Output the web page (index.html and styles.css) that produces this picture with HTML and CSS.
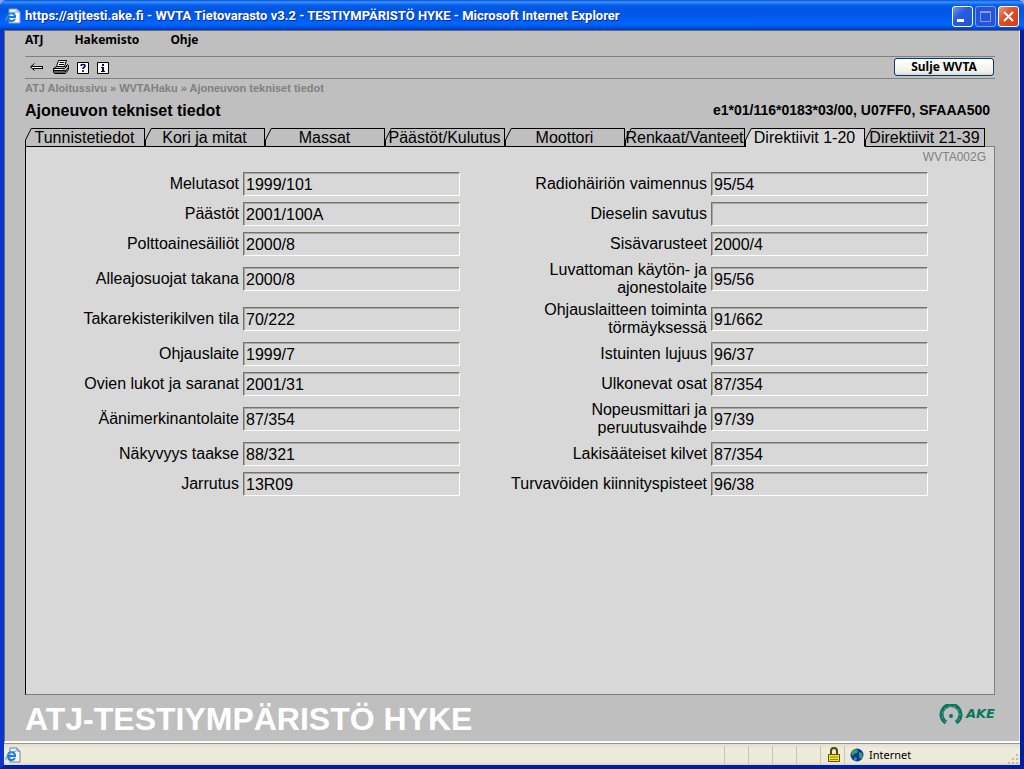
FILE: index.html
```html
<!DOCTYPE html>
<html lang="fi">
<head>
<meta charset="utf-8">
<title>WVTA Tietovarasto v3.2</title>
<link rel="stylesheet" href="styles.css">
</head>
<body>
<div class="window">
  <header class="titlebar">
    <svg class="page-icon" width="16" height="16" viewBox="0 0 16 16" aria-hidden="true">
      <path d="M4 1h8l3 3v11H4z" fill="#f4f6fb" stroke="#8d98b0"/>
      <path d="M12 1v3h3" fill="#cfd6e6" stroke="#8d98b0"/>
      <path d="M2.500 9h7.500c0-5-7-5-7 0s5 5 7 2" fill="none" stroke="#1b78d8" stroke-width="2"/>
      <path d="M1 13C0 9 6 4 11 4" fill="none" stroke="#48a5ee"/>
    </svg>
    <h1 class="window-title">https://atjtesti.ake.fi - WVTA Tietovarasto v3.2 - TESTIYMPÄRISTÖ HYKE - Microsoft Internet Explorer</h1>
    <div class="window-buttons">
      <button class="wbtn" type="button" aria-label="Minimize"><svg width="19" height="19" viewBox="0 0 19 19"><path d="M4 12h7v3H4z" fill="#fff"/></svg></button>
      <button class="wbtn wbtn-off" type="button" aria-label="Maximize" disabled><svg width="19" height="19" viewBox="0 0 19 19"><path d="M4.500 4.500h10v10h-10zM4 5.500h11" fill="none" stroke="#7f9cf0"/></svg></button>
      <button class="wbtn wbtn-close" type="button" aria-label="Close"><svg width="19" height="19" viewBox="0 0 19 19"><path d="M5 5l9 9M14 5l-9 9" stroke="#fff" stroke-width="2"/></svg></button>
    </div>
  </header>

  <main class="page">
    <nav class="menu">
      <a href="#">ATJ</a><a href="#">Hakemisto</a><a href="#">Ohje</a>
    </nav>
    <div class="toolbar">
      <button class="tool" type="button" aria-label="Takaisin"><svg width="15" height="14" viewBox="0 0 15 14"><path d="M5.500 2.500L1.500 6l4 3.500" fill="none" stroke="#000"/><path d="M2 5.500h12M13.500 5v3M4 7.500h10" stroke="#000" fill="none"/><path d="M3 6.500h10" stroke="#fff"/></svg></button>
      <button class="tool" type="button" aria-label="Tulosta"><svg width="17" height="16" viewBox="0 0 17 16"><path d="M4.500 6.500l2-6h8l-2 6z" fill="#fff" stroke="#000"/><path d="M7.500 2.500h5M7 4.500h5" stroke="#000"/><path d="M1.500 8.500l3-2h9l2-2 1 1v4l-3 4h-11l-1-1z" fill="#bbb" stroke="#000"/><path d="M1.500 8.500h11l3-3M1.500 10.500h12M2 12h11l3-4" fill="none" stroke="#000"/><path d="M3 9.500h8" stroke="#fff"/></svg></button>
      <button class="tool" type="button" aria-label="Ohje"><svg width="12" height="14" viewBox="0 0 12 14"><path d="M.5 1.500h11v11H.5z" fill="#fff" stroke="#000"/><path d="M4 5c0-2 4-2 4 0 0 1.500-2 1-2 3M6 9v2" fill="none" stroke="#00007a" stroke-width="1.600"/></svg></button>
      <button class="tool" type="button" aria-label="Tiedot"><svg width="12" height="14" viewBox="0 0 12 14"><path d="M.5 1.500h11v11H.5z" fill="#fff" stroke="#000"/><path d="M5 3h2v2H5zM4 6h3v4h1v1H4v-1h1V7H4z" fill="#00007a"/></svg></button>
      <button class="close-app" type="button">Sulje WVTA</button>
    </div>
    <nav class="crumbs"><a href="#">ATJ Aloitussivu</a> » <a href="#">WVTAHaku</a> » <span>Ajoneuvon tekniset tiedot</span></nav>
    <div class="heading">
      <h2>Ajoneuvon tekniset tiedot</h2>
      <strong>e1*01/116*0183*03/00, U07FF0, SFAAA500</strong>
    </div>

    <div class="tabs">
      <button class="tab" type="button"><svg class="slant" width="7" height="19" viewBox="0 0 7 19"><path d="M0 0h7L.5 12V19H0z" fill="#bfbfbf"/><path d="M6.500 0L.5 12V19" fill="none" stroke="#000"/></svg><span>Tunnistetiedot</span></button>
      <button class="tab" type="button"><svg class="slant" width="7" height="19" viewBox="0 0 7 19"><path d="M0 0h7L.5 12V19H0z" fill="#bfbfbf"/><path d="M6.500 0L.5 12V19" fill="none" stroke="#000"/></svg><span>Kori ja mitat</span></button>
      <button class="tab" type="button"><svg class="slant" width="7" height="19" viewBox="0 0 7 19"><path d="M0 0h7L.5 12V19H0z" fill="#bfbfbf"/><path d="M6.500 0L.5 12V19" fill="none" stroke="#000"/></svg><span>Massat</span></button>
      <button class="tab" type="button"><svg class="slant" width="7" height="19" viewBox="0 0 7 19"><path d="M0 0h7L.5 12V19H0z" fill="#bfbfbf"/><path d="M6.500 0L.5 12V19" fill="none" stroke="#000"/></svg><span>Päästöt/Kulutus</span></button>
      <button class="tab" type="button"><svg class="slant" width="7" height="19" viewBox="0 0 7 19"><path d="M0 0h7L.5 12V19H0z" fill="#bfbfbf"/><path d="M6.500 0L.5 12V19" fill="none" stroke="#000"/></svg><span>Moottori</span></button>
      <button class="tab" type="button"><svg class="slant" width="7" height="19" viewBox="0 0 7 19"><path d="M0 0h7L.5 12V19H0z" fill="#bfbfbf"/><path d="M6.500 0L.5 12V19" fill="none" stroke="#000"/></svg><span>Renkaat/Vanteet</span></button>
      <button class="tab tab-active" type="button"><svg class="slant" width="7" height="19" viewBox="0 0 7 19"><path d="M0 0h7L.5 12V19H0z" fill="#bfbfbf"/><path d="M6.500 0L.5 12V19" fill="none" stroke="#000"/></svg><span>Direktiivit 1-20</span></button>
      <button class="tab" type="button"><svg class="slant" width="7" height="19" viewBox="0 0 7 19"><path d="M0 0h7L.5 12V19H0z" fill="#bfbfbf"/><path d="M6.500 0L.5 12V19" fill="none" stroke="#000"/></svg><span>Direktiivit 21-39</span></button>
      <span class="tab-rest"></span>
    </div>

    <section class="panel">
      <p class="code">WVTA002G</p>
      <form class="fields">
        <label for="a1">Melutasot</label><input id="a1" value="1999/101" readonly>
        <label for="b1">Radiohäiriön vaimennus</label><input id="b1" value="95/54" readonly>
        <label for="a2">Päästöt</label><input id="a2" value="2001/100A" readonly>
        <label for="b2">Dieselin savutus</label><input id="b2" value="" readonly>
        <label for="a3">Polttoainesäiliöt</label><input id="a3" value="2000/8" readonly>
        <label for="b3">Sisävarusteet</label><input id="b3" value="2000/4" readonly>
        <label for="a4">Alleajosuojat takana</label><input id="a4" value="2000/8" readonly>
        <label for="b4">Luvattoman käytön- ja<br>ajonestolaite</label><input id="b4" value="95/56" readonly>
        <label for="a5">Takarekisterikilven tila</label><input id="a5" value="70/222" readonly>
        <label for="b5">Ohjauslaitteen toiminta<br>törmäyksessä</label><input id="b5" value="91/662" readonly>
        <label for="a6">Ohjauslaite</label><input id="a6" value="1999/7" readonly>
        <label for="b6">Istuinten lujuus</label><input id="b6" value="96/37" readonly>
        <label for="a7">Ovien lukot ja saranat</label><input id="a7" value="2001/31" readonly>
        <label for="b7">Ulkonevat osat</label><input id="b7" value="87/354" readonly>
        <label for="a8">Äänimerkinantolaite</label><input id="a8" value="87/354" readonly>
        <label for="b8">Nopeusmittari ja<br>peruutusvaihde</label><input id="b8" value="97/39" readonly>
        <label for="a9">Näkyvyys taakse</label><input id="a9" value="88/321" readonly>
        <label for="b9">Lakisääteiset kilvet</label><input id="b9" value="87/354" readonly>
        <label for="a10">Jarrutus</label><input id="a10" value="13R09" readonly>
        <label for="b10">Turvavöiden kiinnityspisteet</label><input id="b10" value="96/38" readonly>
      </form>
    </section>

    <footer class="brand">
      <strong>ATJ-TESTIYMPÄRISTÖ HYKE</strong>
      <div class="logo">
        <svg width="24" height="21" viewBox="0 0 24 21" aria-hidden="true">
          <path d="M7 18.500A9.500 9.500 0 1 1 17 18.500" fill="none" stroke="#08755c" stroke-width="4"/>
          <path d="M7 18.500A9 9 0 1 1 17 18.500" fill="none" stroke="#6aa294" stroke-width="1" stroke-dasharray="3 2"/>
          <circle cx="12" cy="12" r="2" fill="#08755c"/>
        </svg>
        <span>AKE</span>
      </div>
    </footer>
  </main>

  <div class="statusbar">
    <svg class="page-icon" width="16" height="16" viewBox="0 0 16 16" aria-hidden="true">
      <path d="M5 1h7l3 3v11H5z" fill="#f4f6fb" stroke="#6d7ca8"/>
      <path d="M12 1v3h3" fill="#cfd6e6" stroke="#6d7ca8"/>
      <path d="M2.500 9h7.500c0-5-7-5-7 0s5 5 7 2" fill="none" stroke="#1b78d8" stroke-width="2"/>
      <path d="M1 13C0 9 6 4 11 4" fill="none" stroke="#48a5ee"/>
    </svg>
    <div class="cells"><i></i><i></i><i></i><i></i></div>
    <div class="lock"><svg width="14" height="16" viewBox="0 0 14 16" aria-hidden="true"><path d="M4 8V4c0-4 6-4 6 0v4" fill="none" stroke="#4a4a00" stroke-width="2"/><path d="M1.500 7.500h11v7h-11z" fill="#f3e52c" stroke="#5a5200"/><path d="M3 10h8M3 12.500h8" stroke="#8d8300"/></svg></div>
    <div class="zone"><svg width="14" height="14" viewBox="0 0 14 14" aria-hidden="true"><circle cx="7" cy="7" r="6.500" fill="#1230b8"/><path d="M2 3l3-2 3 1-1 3-3 1-1 2-2-2zM9 4l3 1 1 4-2 2-2-2zM4 9l3 1-1 3-2-1z" fill="#2fa64a"/></svg><span>Internet</span></div>
    <svg class="grip" width="12" height="12" viewBox="0 0 12 12" aria-hidden="true"><path d="M9 1h2v2H9zM5 5h2v2H5zM9 5h2v2H9zM1 9h2v2H1zM5 9h2v2H5zM9 9h2v2H9z" fill="#c0bba4"/></svg>
  </div>
</div>
</body>
</html>
```
FILE: styles.css
```css
* { box-sizing: border-box; }
body {
  margin: 0;
  background: #8aa6e8;
  font-family: "Liberation Sans", Arial, sans-serif;
  font-size: 16px;
  color: #000;
}
a { color: inherit; text-decoration: none; }
button { font: inherit; color: inherit; margin: 0; padding: 0; border: 0; background: none; }
svg { display: block; flex: none; }

.window {
  display: flex;
  flex-direction: column;
  min-height: 100vh;
  border: solid #0a35c8;
  border-width: 0 4px 4px 4px;
  border-right-color: #001ea0;
  border-bottom-color: #001ea0;
  border-radius: 7px 7px 0 0;
  background: #0a35c8;
}

.titlebar {
  display: flex;
  align-items: center;
  gap: 4px;
  height: 30px;
  margin: 0 -4px;
  padding: 2px 5px 0 5px;
  border-radius: 7px 7px 0 0;
  background: linear-gradient(#0a4fd8 0, #3a92ff 2px, #0560ea 5px, #0054e3 10px, #005cf0 18px, #0066ff 24px, #0056e6 27px, #0038b8 30px);
}
.window-title {
  flex: 1;
  min-width: 0;
  margin: 0;
  overflow: hidden;
  white-space: nowrap;
  font: bold 13px/16px Roboto, sans-serif;
  color: #fff;
  text-shadow: 1px 1px 0 #0a2a8c;
}
.window-buttons { display: flex; gap: 2px; }
.wbtn {
  width: 21px;
  height: 21px;
  border: 1px solid #fff;
  border-radius: 3px;
  background: linear-gradient(135deg, #6f98f4, #2a5be0 40%, #2154d8);
}
.wbtn-off { border-color: #7f9cf0; background: #2753d8; }
.wbtn-close { background: linear-gradient(135deg, #f09a80, #e0502c 40%, #d03c14); }

.page {
  flex: 1;
  display: flex;
  flex-direction: column;
  padding: 0 24px 0 20px;
  border: solid;
  border-width: 1px 1px 2px 1px;
  border-color: #6a6a6a #e8e8e8 #fff #6a6a6a;
  background: #bfbfbf;
}

.menu {
  display: flex;
  gap: 31px;
  padding: 1px 0 8px;
  font: bold 12px/16px "Noto Sans", sans-serif;
}
.toolbar {
  display: flex;
  align-items: center;
  gap: 8px;
  height: 23px;
  padding-left: 4px;
  border: solid #808080;
  border-width: 1px 0;
}
.close-app {
  width: 100px;
  height: 18px;
  margin: 0 1px 2px auto;
  border: 1px solid #003c74;
  border-radius: 3px;
  background: linear-gradient(#fff, #f0f0ea 80%, #dcd8cc);
  font: bold 12px/14px "Noto Sans", sans-serif;
}
.crumbs { padding-top: 1px; font-size: 11px; line-height: 16px; font-weight: bold; color: #808080; }
.heading {
  display: flex;
  justify-content: space-between;
  align-items: center;
  padding: 5px 5px 7px 0;
}
.heading h2 { margin: 0; font-size: 16px; line-height: 20px; }
.heading strong { font-size: 14px; line-height: 16px; padding-bottom: 2px; }

.tabs { display: flex; height: 19px; }
.tab {
  position: relative;
  flex: 0 1 120px;
  border: solid #000;
  border-width: 1px 1px 1px 0;
  background: #bfbfbf;
  line-height: 17px;
  white-space: nowrap;
}
.tab-active { background: #d8d8d8; border-bottom-color: #d8d8d8; }
.slant { position: absolute; left: 0; top: -1px; }
.tab span { position: relative; }
.tab-rest { flex: 1; border-bottom: 1px solid #808080; }

.panel {
  flex: 1;
  border: solid #808080;
  border-width: 0 1px 1px 1px;
  border-left-color: #000;
  background: #d8d8d8;
}
.code {
  margin: 0;
  padding: 2px 8px 4px;
  font-size: 12px;
  line-height: 16px;
  text-align: right;
  color: #808080;
}
.fields {
  display: grid;
  grid-template-columns: 217fr 217fr 251fr 217fr 66fr;
  grid-auto-rows: minmax(30px, auto);
  align-items: center;
}
.fields label {
  padding: 2px 4px;
  line-height: 18px;
  text-align: right;
}
.fields label:nth-of-type(odd) { grid-column: 1; }
.fields label:nth-of-type(even) { grid-column: 3; }
.fields input {
  width: 100%;
  min-width: 0;
  height: 24px;
  padding: 1px 2px 0;
  border: 1px solid;
  border-color: #74746c #fff #fff #74746c;
  box-shadow: inset 1px 1px 0 #a8a8a0;
  background: #d8d8d8;
  font: inherit;
  color: inherit;
}

.brand {
  display: flex;
  justify-content: space-between;
  align-items: center;
  padding: 6px 0 4px;
  color: #fff;
}
.brand strong { font-size: 32px; line-height: 36px; }
.logo {
  display: flex;
  align-items: center;
  gap: 3px;
  padding-bottom: 10px;
  font: italic bold 13px/16px "DejaVu Sans", sans-serif;
  color: #08755c;
}

.statusbar {
  display: flex;
  align-items: center;
  height: 22px;
  padding: 0 1px;
  border-top: 1px solid #99978a;
  background: linear-gradient(#e2dfd0, #efecdd 5px, #ece9d8 18px, #dcd8c4);
  font: 11px/16px "Noto Sans", sans-serif;
}
.cells { display: flex; margin-left: auto; }
.cells i { width: 24px; height: 18px; border-left: 1px solid #c8c4b0; }
.lock { display: flex; align-items: center; width: 24px; height: 18px; padding-left: 6px; border-left: 1px solid #c8c4b0; }
.zone { display: flex; align-items: center; gap: 5px; width: 163px; height: 18px; padding-left: 5px; border-left: 1px solid #c8c4b0; }
.grip { align-self: flex-end; }
```
